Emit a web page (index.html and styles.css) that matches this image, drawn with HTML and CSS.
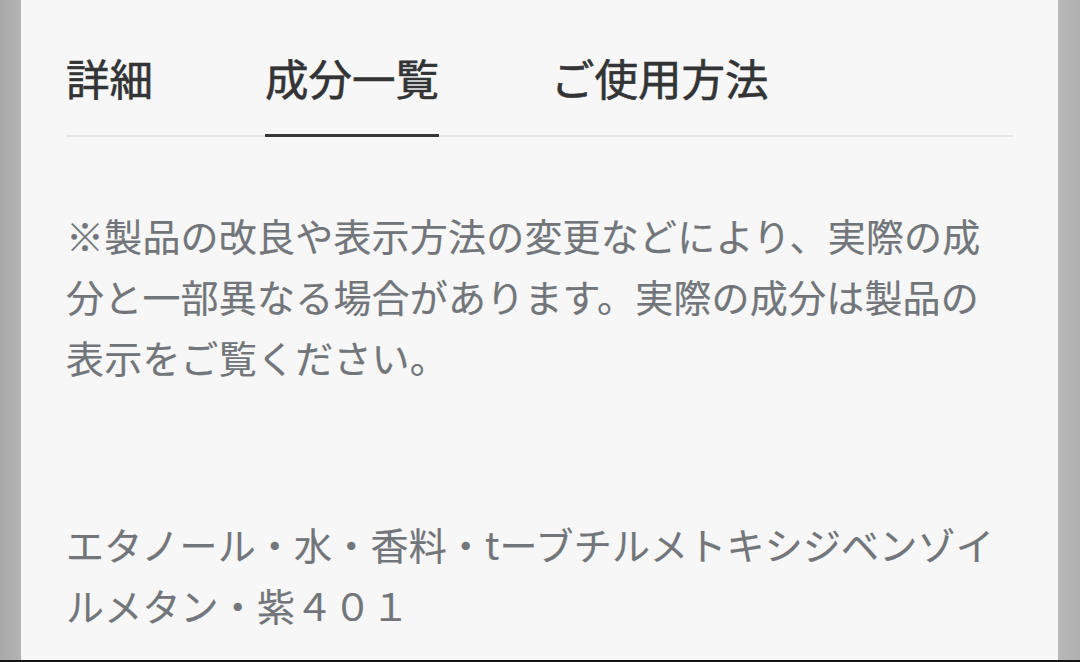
FILE: index.html
```html
<!DOCTYPE html>
<html lang="ja">
<head>
    <meta charset="UTF-8">
    <meta name="viewport" content="width=device-width, initial-scale=1.0">
    <title>成分一覧</title>
    <link rel="stylesheet" href="styles.css">
</head>
<body>
    <div class="screen">
        <div class="sheet">
            <nav class="tabs">
                <div class="tab">詳細</div>
                <div class="tab active">成分一覧</div>
                <div class="tab">ご使用方法</div>
            </nav>

            <p class="note">※製品の改良や表示方法の変更などにより、実際の成分と一部異なる場合があります。実際の成分は製品の表示をご覧ください。</p>

            <p class="ingredients">エタノール・水・香料・tーブチルメトキシジベンゾイルメタン・紫４０１</p>
        </div>
    </div>
</body>
</html>
```

FILE: styles.css
```css
html, body {
    margin: 0;
    height: 662px;
    overflow: hidden;
}
body {
    font-family: "Noto Sans CJK JP", "Noto Sans", sans-serif;
    background-color: #b2b2b2;
}
.screen {
    height: 660px;
    border-bottom: 2px solid #151515;
    background: linear-gradient(to right, #a9a9a9 0, #b3b3b3 21px, #b8b8b8 1058px, #b0b0b0 100%);
}
.sheet {
    margin-left: 21px;
    width: 1037px;
    height: 660px;
    box-sizing: border-box;
    padding: 48px 45px 0;
    background-color: #f7f7f7;
}
.tabs {
    display: flex;
    gap: 112px;
    border-bottom: 2px solid #e6e6e6;
}
.tab {
    font-size: 43.5px;
    line-height: 60px;
    color: #333436;
    -webkit-text-stroke: 0.6px #333436;
    padding-bottom: 26px;
    border-bottom: 3px solid transparent;
    margin-bottom: -2px;
}
.tab.active {
    border-bottom-color: #37383a;
}
.note, .ingredients {
    margin: 0;
    font-size: 38px;
    line-height: 60.8px;
    letter-spacing: 0.2px;
    color: #72767a;
    -webkit-text-stroke: 0.2px #72767a;
}
.note {
    margin-top: 68px;
}
.ingredients {
    margin-top: 127px;
}
```
